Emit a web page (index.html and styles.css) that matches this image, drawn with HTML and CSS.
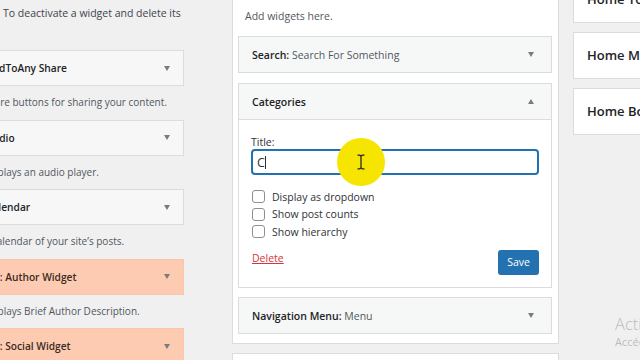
FILE: index.html
```html
<!DOCTYPE html>
<html lang="en">
<head>
<meta charset="utf-8">
<title>Widgets</title>
<link rel="stylesheet" href="styles.css">
</head>
<body>
<div class="page">
  <section class="available">
    <p class="intro">To deactivate a widget and delete its</p>
    <div class="avail-list">
      <div class="avail-item">
        <div class="avail-top"><h3>AddToAny Share</h3><span class="arrow-down"></span></div>
        <p class="desc">Share buttons for sharing your content.</p>
      </div>
      <div class="avail-item">
        <div class="avail-top"><h3>Audio</h3><span class="arrow-down"></span></div>
        <p class="desc">Displays an audio player.</p>
      </div>
      <div class="avail-item">
        <div class="avail-top"><h3>Calendar</h3><span class="arrow-down"></span></div>
        <p class="desc">A calendar of your site’s posts.</p>
      </div>
      <div class="avail-item">
        <div class="avail-top hl"><h3>NT: Author Widget</h3><span class="arrow-down"></span></div>
        <p class="desc">Displays Brief Author Description.</p>
      </div>
      <div class="avail-item">
        <div class="avail-top hl"><h3>NT: Social Widget</h3><span class="arrow-down"></span></div>
        <p class="desc">Displays social links.</p>
      </div>
    </div>
  </section>

  <section class="sidebars">
    <div class="sidebar">
      <p class="sb-desc">Add widgets here.</p>
      <div class="widget">
        <div class="widget-top"><h3><b>Search:</b> <span class="in-title">Search For Something</span></h3><span class="arrow-down"></span></div>
      </div>
      <div class="widget">
        <div class="widget-top open"><h3><b>Categories</b></h3><span class="arrow-up"></span></div>
        <div class="widget-body">
          <label class="field-label">Title:</label>
          <div class="field"><span>C</span><span class="caret"></span></div>
          <ul class="checks">
            <li><span class="checkbox"></span>Display as dropdown</li>
            <li><span class="checkbox"></span>Show post counts</li>
            <li><span class="checkbox"></span>Show hierarchy</li>
          </ul>
          <div class="actions">
            <a class="delete">Delete</a>
            <span class="save">Save</span>
          </div>
        </div>
      </div>
      <div class="widget">
        <div class="widget-top"><h3><b>Navigation Menu:</b> <span class="in-title">Menu</span></h3><span class="arrow-down"></span></div>
      </div>
    </div>
    <div class="sidebar next"></div>
  </section>

  <section class="right">
    <div class="area">Home Top</div>
    <div class="area">Home Middle</div>
    <div class="area">Home Bottom</div>
  </section>
</div>

<div class="watermark">
  <div class="wm-title">Activer Windows</div>
  <div class="wm-sub">Accédez aux paramètres pour activer Windows.</div>
</div>

<div class="spot">
  <svg width="10" height="16" viewBox="0 0 10 16"><path d="M1.5 1.2h2.3L5 2.2l1.2-1h2.3M5 2.2v11.6M1.5 14.8h2.3L5 13.8l1.2 1h2.3" fill="none" stroke="#2b2b2b" stroke-width="1.3"/></svg>
</div>
</body>
</html>
```

FILE: styles.css
```css
* { box-sizing: border-box; }

body {
  margin: 0;
  width: 640px;
  height: 360px;
  overflow: hidden;
  position: relative;
  background: #f0f0f1;
  font-family: "Open Sans", "Noto Sans", sans-serif;
  font-size: 10.5px;
  color: #1d2327;
}

h3 { margin: 0; font-size: 10.5px; font-weight: 600; white-space: nowrap; }

.page { display: flex; height: 360px; }

/* left column */
.available { width: 232px; flex: none; }
.intro {
  margin: 0 0 0 3px;
  height: 50px;
  line-height: 26px;
  color: #3c434a;
  white-space: nowrap;
}
.avail-list { margin-left: -30px; width: 214px; }
.avail-top {
  height: 36px;
  display: flex;
  align-items: center;
  justify-content: space-between;
  padding: 0 13px 0 15px;
  background: #f7f7f7;
  border: 1px solid #dcdcde;
}
.avail-top h3 { font-size: 10.2px; }
.avail-top.hl { background: #fdcbb2; border-color: #f9c6ac; color: #3b2b23; }
.desc {
  margin: 0;
  height: 33.5px;
  line-height: 33px;
  padding-left: 13px;
  font-size: 10px;
  color: #50575e;
  white-space: nowrap;
}

.arrow-down, .arrow-up {
  width: 0; height: 0;
  border-left: 3.5px solid transparent;
  border-right: 3.5px solid transparent;
  flex: none;
}
.arrow-down { border-top: 5px solid #787c82; }
.arrow-up { border-bottom: 5px solid #787c82; }

/* middle column */
.sidebars { width: 327px; flex: none; }
.sidebar {
  background: #fff;
  border: 1px solid #dcdcde;
  border-top: none;
  padding: 0 6px 9px 5px;
}
.sidebar.next { border-top: 1px solid #dcdcde; margin-top: 9px; height: 40px; }
.sb-desc {
  margin: 0;
  height: 36px;
  line-height: 32px;
  padding-left: 7px;
  color: #50575e;
}
.widget { border: 1px solid #dcdcde; background: #fff; }
.widget + .widget { margin-top: 10px; }
.widget:last-child { margin-top: 9px; }
.widget-top {
  height: 35px;
  display: flex;
  align-items: center;
  justify-content: space-between;
  padding: 0 17px 0 13px;
  background: #f6f7f7;
}
.widget-top.open { height: 36px; border-bottom: 1px solid #dcdcde; }
.widget-top b { font-weight: 600; }
.in-title { font-weight: 400; color: #50575e; }

.widget-body { padding: 15px 12px 12px; }
.field-label { display: block; line-height: 14px; color: #2c3338; }
.field {
  height: 26px;
  border: 2px solid #2271b1;
  border-radius: 4px;
  display: flex;
  align-items: center;
  padding-left: 4px;
  font-size: 12.5px;
  color: #2c3338;
}
.caret { width: 1px; height: 13px; background: #2c3338; }
.checks { list-style: none; margin: 13px 0 0; padding: 0; }
.checks li {
  height: 17.5px;
  display: flex;
  align-items: center;
  gap: 7px;
  color: #2c3338;
}
.checkbox {
  width: 13px; height: 13px;
  margin-left: 1px;
  border: 1px solid #8c8f94;
  border-radius: 3px;
  background: #fff;
}
.actions {
  margin-top: 9.5px;
  display: flex;
  justify-content: space-between;
  align-items: flex-start;
}
.delete {
  margin: 1px 0 0 1px;
  line-height: 14px;
  color: #d63638;
  text-decoration: underline;
}
.save {
  height: 25px;
  line-height: 25px;
  padding: 0 9px;
  border-radius: 3px;
  background: #2271b1;
  color: #fff;
}

/* right column */
.right { flex: 1; padding-left: 14px; min-width: 0; }
.area {
  width: 120px;
  height: 47px;
  line-height: 45px;
  padding-left: 13px;
  background: #fff;
  border: 1px solid #dcdcde;
  font-size: 13px;
  font-weight: 600;
  color: #1d2327;
  white-space: nowrap;
}
.area:first-child { margin-top: -24px; }
.area + .area { margin-top: 9px; }

/* overlays */
.watermark {
  position: absolute;
  left: 615px;
  top: 313px;
  color: #bdbdbd;
  white-space: nowrap;
}
.wm-title { font-size: 16.5px; font-weight: 300; line-height: 22px; }
.wm-sub { font-size: 11px; line-height: 14px; }

.spot {
  position: absolute;
  left: 337px;
  top: 138px;
  width: 48px;
  height: 48px;
  border-radius: 50%;
  background: #f5e500;
  display: flex;
  align-items: center;
  justify-content: center;
}
```
